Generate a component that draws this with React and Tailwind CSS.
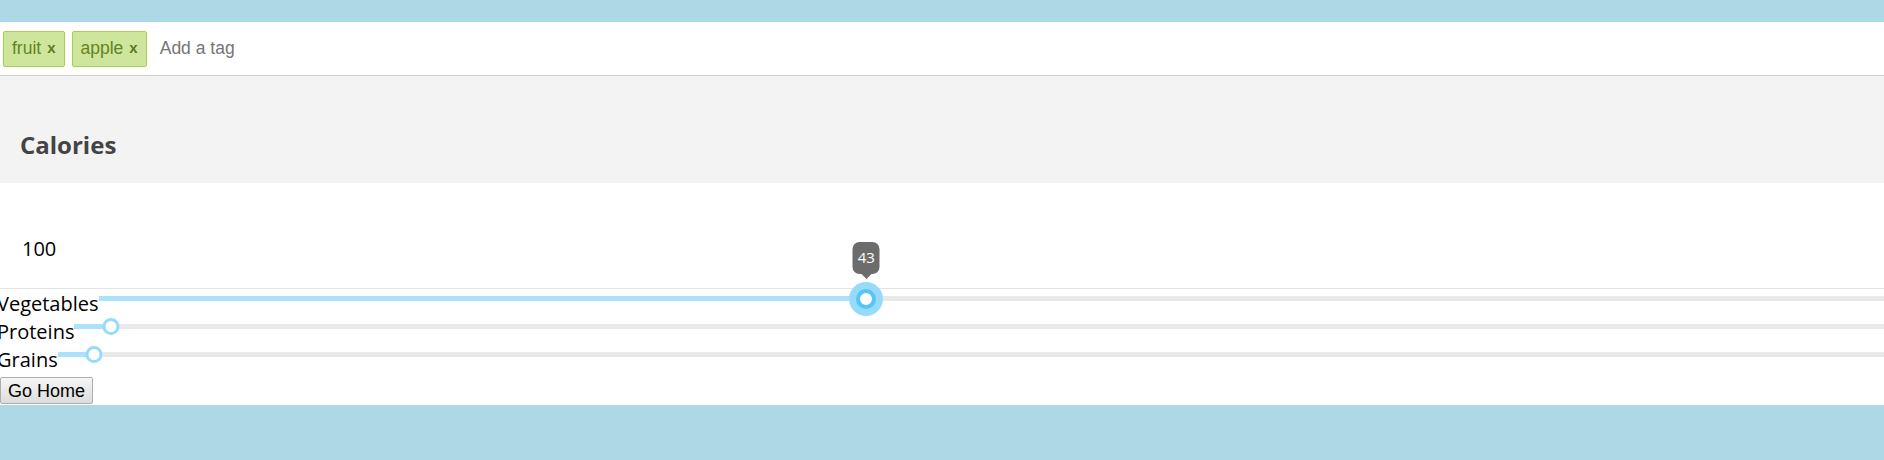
import React from "react";

function Tag({ text }) {
  return (
    <div className="flex items-center h-[36px] px-[8px] border border-[#a5d24a] bg-[#cde69c] text-[#638421] rounded-[2px] text-[17.5px]">
      <span>{text}</span>
      <span className="ml-[6px] font-bold text-[15px] text-[#5a7a1f]">x</span>
    </div>
  );
}

function SliderRow({ label, value, active }) {
  return (
    <div className="flex items-start h-[28px]">
      <span className="shrink-0 -ml-[3px] text-[20px] leading-[28px] text-black">{label}</span>
      <div className="relative flex-1 h-[28px]">
        <div className="absolute left-0 right-0 top-[6px] h-[5px] bg-[#e9e9e9]" />
        <div className="absolute left-0 top-[6px] h-[5px] bg-[#abe2fb]" style={{ width: `${value}%` }} />
        {active ? (
          <div className="absolute top-[-1.5px] -translate-x-1/2 z-10" style={{ left: `${value}%` }}>
            <div className="w-[20px] h-[20px] rounded-full border-[4px] border-[#57c5f7] bg-white shadow-[0_0_0_7px_#96dbfa]" />
            <div className="absolute bottom-[calc(100%+10px)] left-1/2 -translate-x-1/2 flex flex-col items-center">
              <div className="w-[27px] h-[32px] rounded-[7px] bg-[#6c6c6c] text-white text-[15px] flex items-center justify-center">
                {value}
              </div>
              <div className="w-0 h-0 border-x-[5px] border-x-transparent border-t-[5px] border-t-[#6c6c6c]" />
            </div>
          </div>
        ) : (
          <div
            className="absolute top-0 w-[17px] h-[17px] rounded-full border-[3px] border-[#96dbfa] bg-white -translate-x-1/2"
            style={{ left: `${value}%` }}
          />
        )}
      </div>
    </div>
  );
}

export default function App() {
  return (
    <div className="min-h-[460px] bg-[#add8e6] font-['Open_Sans',sans-serif] overflow-hidden">
      <div className="h-[22px]" />
      <div className="bg-white">
        <div className="h-[54px] flex items-center gap-[7px] pl-[3px] border-b border-[#cfcfcf] font-['Liberation_Sans',Arial,sans-serif]">
          <Tag text="fruit" />
          <Tag text="apple" />
          <span className="ml-[6px] text-[17.5px] text-[#757575]">Add a tag</span>
        </div>
        <div className="h-[107px] bg-[#f3f3f3] pt-[53px] pl-[20px]">
          <h3 className="text-[24px] leading-[32px] font-bold text-[#444444]">Calories</h3>
        </div>
        <div className="h-[106px] border-b border-[#e5e5e5] pt-[52px] pl-[22px]">
          <p className="text-[20px] leading-[28px] text-black">100</p>
        </div>
        <div className="pt-[1px]">
          <SliderRow label="Vegetables" value={43} active />
          <SliderRow label="Proteins" value={2} />
          <SliderRow label="Grains" value={2} />
        </div>
        <div className="pt-[3px] pb-[1px]">
          <button className="w-[93px] h-[27px] border border-[#adadad] rounded-[2px] bg-gradient-to-b from-[#f6f6f6] to-[#dcdcdc] text-[18px] leading-none text-black font-['Liberation_Sans',Arial,sans-serif]">
            Go Home
          </button>
        </div>
      </div>
    </div>
  );
}
